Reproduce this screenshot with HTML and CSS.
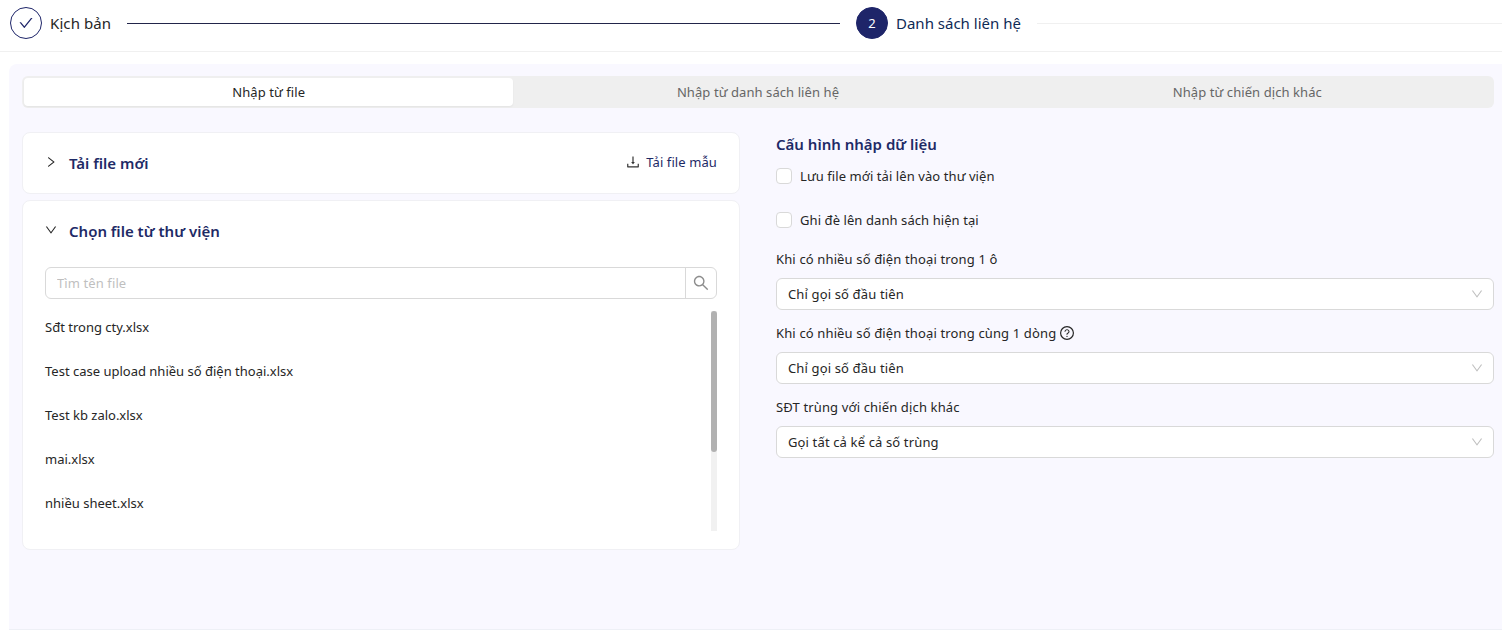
FILE: index.html
```html
<!DOCTYPE html>
<html lang="vi">
<head>
  <meta charset="UTF-8">
  <meta name="viewport" content="width=device-width, initial-scale=1.0">
  <title>Danh sách liên hệ</title>
  <link rel="stylesheet" href="styles.css">
</head>
<body>
  <!-- Icons -->
  <svg class="sprite" width="0" height="0">
    <symbol id="icon-check" viewBox="64 64 896 896"><path d="M912 190h-69.9c-9.8 0-19.1 4.5-25.1 12.2L404.7 724.5 207 474a32 32 0 00-25.1-12.2H112c-6.7 0-10.4 7.7-6.3 12.9l273.9 347c12.8 16.2 37.4 16.2 50.3 0l488.4-618.9c4.1-5.1.4-12.8-6.3-12.8z"/></symbol>
    <symbol id="icon-right" viewBox="64 64 896 896"><path d="M765.7 486.8L314.9 134.7A7.97 7.97 0 00302 141v77.3c0 4.9 2.3 9.6 6.1 12.6l360 281.1-360 281.1c-3.9 3-6.1 7.7-6.1 12.6V883c0 6.7 7.7 10.4 12.9 6.3l450.8-352.1a31.96 31.96 0 000-50.4z"/></symbol>
    <symbol id="icon-down" viewBox="64 64 896 896"><path d="M884 256h-75c-5.1 0-9.9 2.5-12.9 6.6L512 654.2 227.9 262.6c-3-4.1-7.8-6.6-12.9-6.6h-75c-6.5 0-10.3 7.4-6.5 12.7l352.6 486.1c12.8 17.6 39 17.6 51.7 0l352.6-486.1c3.9-5.3.1-12.7-6.4-12.7z"/></symbol>
    <symbol id="icon-search" viewBox="64 64 896 896"><path d="M909.6 854.5L649.9 594.8C690.2 542.7 712 479 712 412c0-80.2-31.3-155.4-87.9-212.1-56.6-56.7-132-87.9-212.1-87.9s-155.5 31.3-212.1 87.9C143.2 256.5 112 331.8 112 412c0 80.1 31.3 155.5 87.9 212.1C256.5 680.8 331.8 712 412 712c67 0 130.6-21.8 182.7-62l259.7 259.6a8.2 8.2 0 0011.6 0l43.6-43.5a8.2 8.2 0 000-11.6zM570.4 570.4C528 612.7 471.8 636 412 636s-116-23.3-158.4-65.6C211.3 528 188 471.8 188 412s23.3-116.1 65.6-158.4C296 211.3 352.2 188 412 188s116.1 23.2 158.4 65.6S636 352.2 636 412s-23.3 116.1-65.6 158.4z"/></symbol>
    <symbol id="icon-download" viewBox="64 64 896 896"><path d="M505.7 661a8 8 0 0012.6 0l112-141.7c4.1-5.2.4-12.9-6.3-12.9h-74.1V168c0-4.4-3.6-8-8-8h-60c-4.4 0-8 3.6-8 8v338.3H400c-6.7 0-10.4 7.7-6.3 12.9l112 141.8zM878 626h-60c-4.4 0-8 3.6-8 8v154H214V634c0-4.4-3.6-8-8-8h-60c-4.4 0-8 3.6-8 8v198c0 17.7 14.3 32 32 32h684c17.7 0 32-14.3 32-32V634c0-4.4-3.6-8-8-8z"/></symbol>
    <symbol id="icon-question" viewBox="64 64 896 896"><circle cx="512" cy="512" r="410" fill="none" stroke="currentColor" stroke-width="76"/><path d="M623.6 316.7C593.6 290.4 554 276 512 276s-81.6 14.5-111.6 40.7C369.2 344 352 380.7 352 420v7.6c0 4.4 3.6 8 8 8h48c4.4 0 8-3.6 8-8V420c0-44.1 43.1-80 96-80s96 35.9 96 80c0 31.1-22 59.6-56.1 72.7-21.2 8.1-39.2 22.3-52.1 40.9-13.1 19-19.9 41.8-19.9 64.9V620c0 4.4 3.6 8 8 8h48c4.4 0 8-3.6 8-8v-22.7a48.3 48.3 0 0130.9-44.8c59-22.7 97.1-74.7 97.1-132.5.1-39.3-17.1-76-48.3-103.3zM472 732a40 40 0 1080 0 40 40 0 10-80 0z"/></symbol>
  </svg>

  <!-- Steps -->
  <header class="steps">
    <div class="step step-done">
      <span class="step-icon"><svg class="icon"><use href="#icon-check"/></svg></span>
      <span class="step-title">Kịch bản</span>
      <span class="step-line"></span>
    </div>
    <div class="step step-active">
      <span class="step-icon">2</span>
      <span class="step-title">Danh sách liên hệ</span>
      <span class="step-line"></span>
    </div>
  </header>

  <main class="panel">
    <div class="tabs">
      <div class="tab selected">Nhập từ file</div>
      <div class="tab">Nhập từ danh sách liên hệ</div>
      <div class="tab">Nhập từ chiến dịch khác</div>
    </div>

    <div class="columns">
      <div class="files">
        <section class="card">
          <div class="card-header">
            <svg class="icon arrow"><use href="#icon-right"/></svg>
            <h3>Tải file mới</h3>
            <a class="download"><svg class="icon"><use href="#icon-download"/></svg><span>Tải file mẫu</span></a>
          </div>
        </section>

        <section class="card card-open">
          <div class="card-header">
            <svg class="icon arrow"><use href="#icon-down"/></svg>
            <h3>Chọn file từ thư viện</h3>
          </div>
          <div class="search">
            <input type="text" placeholder="Tìm tên file">
            <button><svg class="icon"><use href="#icon-search"/></svg></button>
          </div>
          <div class="list-wrap">
            <ul class="list">
              <li>Sđt trong cty.xlsx</li>
              <li>Test case upload nhiều số điện thoại.xlsx</li>
              <li>Test kb zalo.xlsx</li>
              <li>mai.xlsx</li>
              <li>nhiều sheet.xlsx</li>
            </ul>
            <div class="scrollbar"><div class="scroll-thumb"></div></div>
          </div>
        </section>
      </div>

      <!-- Import settings -->
      <form class="config">
        <h3>Cấu hình nhập dữ liệu</h3>
        <label class="check"><input type="checkbox"><span>Lưu file mới tải lên vào thư viện</span></label>
        <label class="check"><input type="checkbox"><span>Ghi đè lên danh sách hiện tại</span></label>

        <div class="label"><span>Khi có nhiều số điện thoại trong 1 ô</span></div>
        <div class="select"><span>Chỉ gọi số đầu tiên</span><svg class="icon"><use href="#icon-down"/></svg></div>

        <div class="label"><span>Khi có nhiều số điện thoại trong cùng 1 dòng</span><svg class="icon"><use href="#icon-question"/></svg></div>
        <div class="select"><span>Chỉ gọi số đầu tiên</span><svg class="icon"><use href="#icon-down"/></svg></div>

        <div class="label"><span>SĐT trùng với chiến dịch khác</span></div>
        <div class="select"><span>Gọi tất cả kể cả số trùng</span><svg class="icon"><use href="#icon-down"/></svg></div>
      </form>
    </div>
  </main>
</body>
</html>
```
FILE: styles.css
```css
* {
  box-sizing: border-box;
}

body {
  margin: 0;
  height: 630px;
  overflow: hidden;
  display: flex;
  flex-direction: column;
  background: #fff;
  color: #262626;
  font-family: "Noto Sans", "Open Sans", sans-serif;
  font-size: 13px;
  line-height: 22px;
}

h3 {
  margin: 0;
  font-size: 15px;
  font-weight: 600;
  line-height: 24px;
  color: #1e2a66;
}

.sprite {
  position: absolute;
}

.icon {
  width: 14px;
  height: 14px;
  flex: none;
  fill: currentColor;
}

/* Steps */
.steps {
  display: flex;
  height: 52px;
  padding: 7px 0 0 10px;
  border-bottom: 1px solid #f0f0f0;
}

.step {
  display: flex;
  align-items: center;
  height: 32px;
}

.step-done {
  width: 830px;
  margin-right: 16px;
}

.step-active {
  flex: 1;
}

.step-icon {
  display: flex;
  align-items: center;
  justify-content: center;
  width: 32px;
  height: 32px;
  margin-right: 8px;
  border: 1px solid #1e2569;
  border-radius: 50%;
  color: #1e2569;
}

.step-active .step-icon {
  background: #1e2569;
  color: #fff;
}

.step-title {
  margin-right: 16px;
  font-size: 15px;
}

.step-done .step-title {
  letter-spacing: 0.1px;
}

.step-active .step-title {
  color: #0f2a55;
}

.step-line {
  flex: 1;
  height: 1px;
  background: #f0f0f0;
}

.step-done .step-line {
  background: #22254a;
}

/* Panel */
.panel {
  flex: 1;
  margin: 12px 0 0 9px;
  padding: 12px 8px 0 13px;
  background: #f9f8ff;
  border-bottom: 1px solid #eef0f6;
  border-radius: 8px 0 0 0;
}

.tabs {
  display: grid;
  grid-template-columns: repeat(3, 1fr);
  height: 32px;
  padding: 2px;
  background: #efefef;
  border-radius: 6px;
}

.tab {
  line-height: 28px;
  letter-spacing: 0.08px;
  text-align: center;
  color: #666;
  border-radius: 4px;
}

.tab.selected {
  background: #fff;
  color: #262626;
  box-shadow: 0 1px 2px rgba(0, 0, 0, 0.05);
}

.columns {
  display: grid;
  grid-template-columns: 1fr 1fr;
  gap: 36px;
  margin-top: 24px;
}

/* File cards */
.files {
  display: flex;
  flex-direction: column;
  gap: 6px;
}

.card {
  height: 62px;
  padding: 0 22px;
  background: #fff;
  border: 1px solid #f0f0f4;
  border-radius: 8px;
}

.card-open {
  height: 350px;
}

.card-header {
  display: flex;
  align-items: center;
  height: 60px;
}

.card-header .arrow {
  width: 12px;
  height: 12px;
  margin: 0 12px 3px 0;
}

.download {
  display: flex;
  align-items: center;
  gap: 6px;
  margin: 0 0 2px auto;
  letter-spacing: 0.1px;
  color: #1e2a66;
}

.download .icon {
  color: #333;
}

.search {
  display: flex;
  height: 32px;
  margin-top: 6px;
  border: 1px solid #d9d9d9;
  border-radius: 6px;
}

.search input {
  flex: 1;
  padding: 0 11px;
  border: none;
  outline: none;
  background: none;
  font: inherit;
  letter-spacing: 0.1px;
}

.search input::placeholder {
  color: #bfbfbf;
}

.search button {
  display: flex;
  align-items: center;
  justify-content: center;
  width: 31px;
  padding: 0;
  background: none;
  border: none;
  border-left: 1px solid #d9d9d9;
  color: #8c8c8c;
}

.search .icon {
  width: 16px;
  height: 16px;
}

.list-wrap {
  display: flex;
  height: 220px;
  margin-top: 12px;
}

.list {
  flex: 1;
  margin: 0;
  padding: 0;
  list-style: none;
}

.list li {
  height: 44px;
  line-height: 32px;
}

.scrollbar {
  width: 6px;
  background: #f1f1f1;
}

.scroll-thumb {
  height: 141px;
  background: #b1b1b1;
  border-radius: 3px;
}

/* Import settings */
.config h3 {
  margin-bottom: 9px;
}

.check {
  display: flex;
  align-items: center;
  gap: 8px;
  height: 22px;
  margin-bottom: 22px;
  letter-spacing: 0.08px;
}

.check input {
  appearance: none;
  width: 16px;
  height: 16px;
  margin: 0;
  background: #fff;
  border: 1px solid #d9d9d9;
  border-radius: 4px;
}

.label {
  display: flex;
  align-items: center;
  gap: 4px;
  height: 22px;
  margin-bottom: 8px;
  letter-spacing: 0.14px;
}

.check + .label {
  margin-top: -5px;
}

.select {
  display: flex;
  align-items: center;
  justify-content: space-between;
  height: 32px;
  margin-bottom: 12px;
  padding: 0 10px 0 11px;
  background: #fff;
  border: 1px solid #d9d9d9;
  border-radius: 6px;
  letter-spacing: 0.14px;
}

.select .icon {
  width: 12px;
  height: 12px;
  color: #bfbfbf;
}
```
